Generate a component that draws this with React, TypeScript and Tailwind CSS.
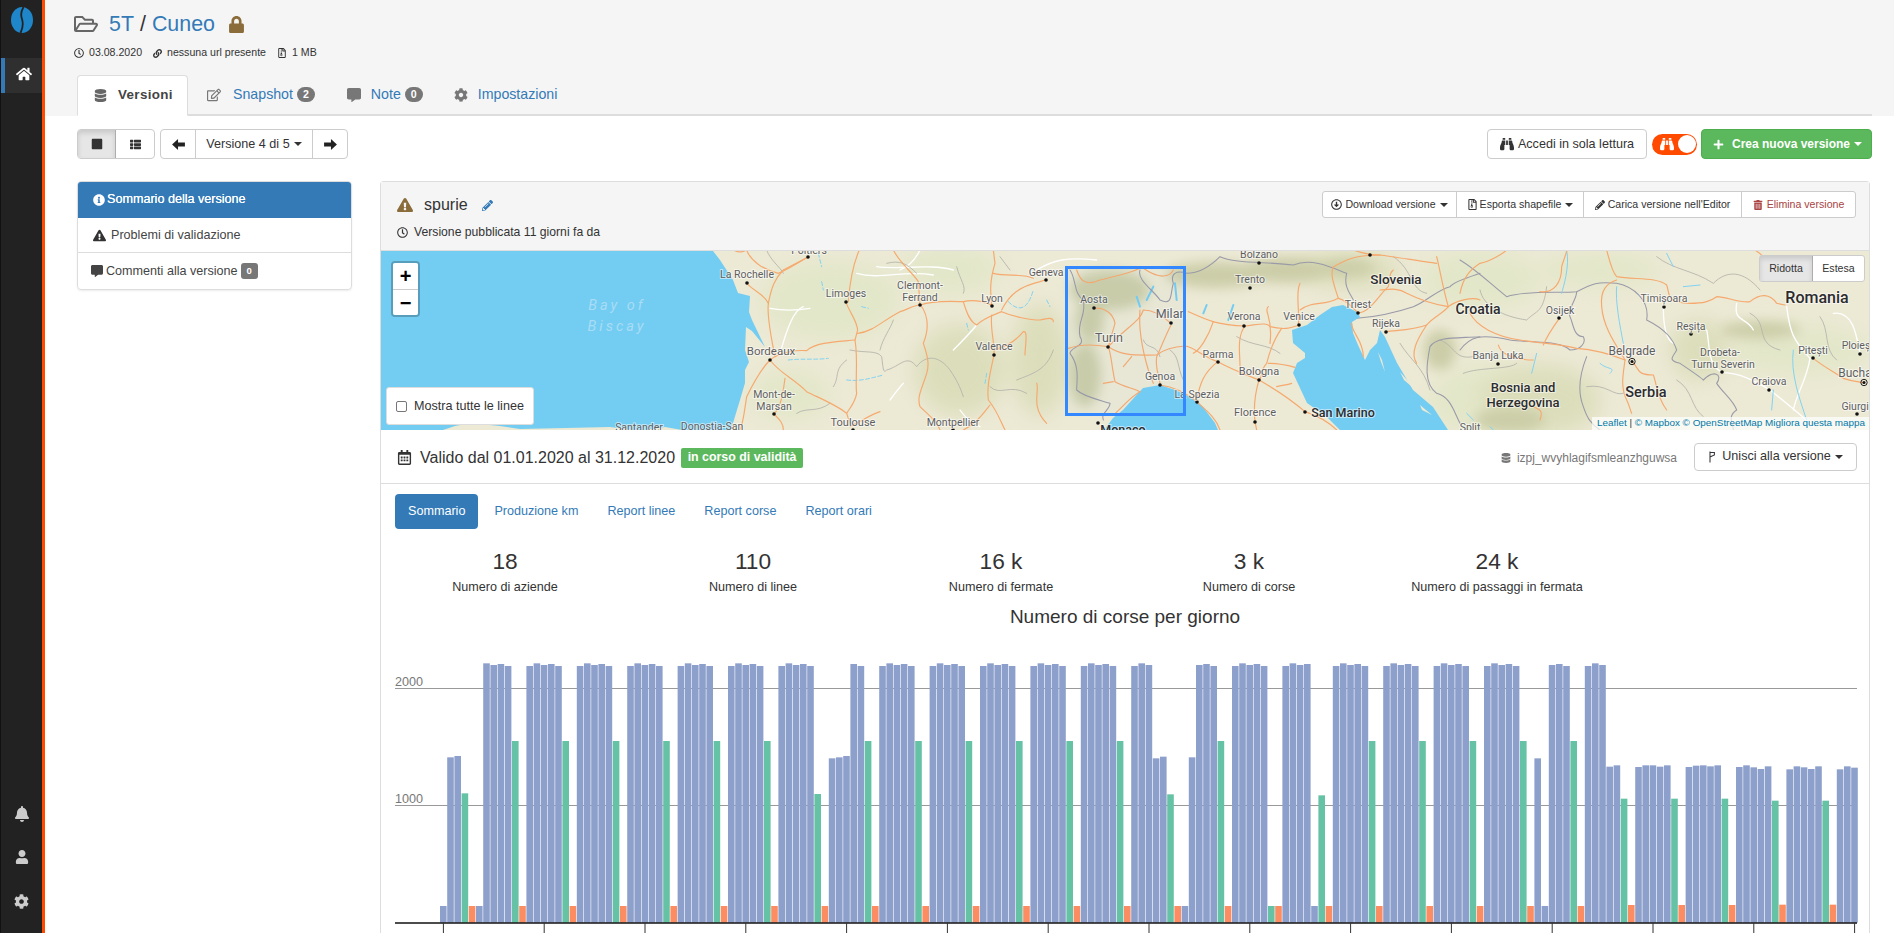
import React from "react";
import {
  FaHome, FaBell, FaUser, FaCog, FaLock, FaRegFolderOpen, FaRegClock, FaLink, FaRegFileArchive,
  FaDatabase, FaRegEdit, FaCommentAlt, FaStop, FaThList, FaBinoculars,
  FaPlus, FaInfoCircle, FaExclamationTriangle, FaPencilAlt, FaRegArrowAltCircleDown, FaTrashAlt, FaRegCalendarAlt,
} from "react-icons/fa";

const Caret = () => (
  <span className="inline-block w-0 h-0 ml-[4px] align-middle border-x-[4px] border-x-transparent border-t-[4px] border-t-current" />
);

const Arrow = ({ flip }: { flip?: boolean }) => (
  <svg viewBox="0 0 14 12" className={flip ? "w-[13px] h-[11px] -scale-x-100" : "w-[13px] h-[11px]"} fill="#222">
    <path d="M14,3.8 H6.5 V0 L0,6 L6.5,12 V8.2 H14 Z" />
  </svg>
);

/* ---------- chart data: y values are measured on the chart's 3x scale, from an 818 baseline ---------- */
const B = "#8da0cb", G = "#66c2a5", O = "#fc8d62";
type Bar = [string, number];
const week: number[] = [48, 40, 45, 42, 48];
function buildBars(): Bar[] {
  const bars: Bar[] = [];
  const blues = (a: number[]) => a.forEach((y) => bars.push([B, y]));
  const tail = (g = 273, o = 768) => { bars.push([G, g]); bars.push([O, o]); };
  blues([768, 322, 318]); tail(430);
  blues([768, 40, 45, 42, 48]); tail();
  for (let i = 0; i < 5; i++) { blues(week); tail(); }
  blues(week); tail(432);
  blues([325, 322, 318, 42, 48]); tail();
  for (let i = 0; i < 5; i++) { blues(week); tail(); }
  blues([48, 40, 45, 325, 320]); tail(433);
  blues([768, 322, 45, 42, 48]); tail();
  blues(week); tail(768);
  blues([48, 40, 45, 42, 768]); tail(436);
  for (let i = 0; i < 4; i++) { blues(week); tail(); }
  blues([325, 768, 45, 42, 48]); tail();
  blues([48, 40, 45, 350, 346]); tail(446, 765);
  blues([351, 346, 346, 350, 346]); tail(446, 765);
  blues([351, 347, 346, 349, 346]); tail(446, 765);
  blues([351, 346, 352, 357, 349]); tail(452, 764);
  blues([358, 349, 352, 357, 349]); tail(452, 764);
  blues([358, 349, 353]);
  return bars;
}
const bars = buildBars();

function Chart() {
  const ticks = Array.from({ length: 15 }, (_, i) => 443.4 + i * 100.8);
  return (
    <svg viewBox="381 640 1488 293" className="block w-[1488px] h-[293px] font-['Liberation_Sans',Arial,sans-serif]">
      <line x1="395" x2="1857" y1="688.5" y2="688.5" stroke="#999" strokeWidth="1" />
      <line x1="395" x2="1857" y1="805.5" y2="805.5" stroke="#999" strokeWidth="1" />
      <text x="395" y="686" fontSize="12.6" fill="#777">2000</text>
      <text x="395" y="803" fontSize="12.6" fill="#777">1000</text>
      {bars.map(([c, y], i) => (
        <rect key={i} x={440 + i * 7.2} y={650 + y / 3} width={6.6} height={(818 - y) / 3} fill={c} />
      ))}
      <line x1="395" x2="1857" y1="923" y2="923" stroke="#111" strokeWidth="1.6" />
      {ticks.map((x) => (
        <line key={x} x1={x} x2={x} y1="923" y2="933" stroke="#333" strokeWidth="1" />
      ))}
    </svg>
  );
}

/* ---------- map ---------- */
type L = [string, number, number, number?, number?];
const labels: L[] = [
  ["Poitiers", 809, 254], ["La Rochelle", 747, 278], ["Limoges", 846, 297], ["Clermont-", 920, 289], ["Ferrand", 920, 301],
  ["Lyon", 992, 302], ["Geneva", 1046, 276], ["Valence", 994, 350], ["Bordeaux", 771, 355, 11.5], ["Mont-de-", 774, 398], ["Marsan", 774, 410],
  ["Toulouse", 853, 426, 11], ["Montpellier", 953, 426, 10.5], ["Santander", 639, 431], ["Donostia-San", 712, 430],
  ["Aosta", 1094, 303], ["Milan", 1171, 318, 12.5], ["Turin", 1109, 342, 12.5], ["Genoa", 1160, 380], ["La Spezia", 1197, 398],
  ["Bolzano", 1259, 258], ["Trento", 1250, 283], ["Verona", 1244, 320], ["Venice", 1299, 320], ["Parma", 1218, 358], ["Bologna", 1259, 375, 11],
  ["Florence", 1255, 416, 11], ["Triest", 1358, 308], ["Rijeka", 1386, 327], ["Split", 1470, 431],
  ["Osijek", 1560, 314], ["Timișoara", 1664, 302], ["Reșița", 1691, 330], ["Banja Luka", 1498, 359], ["Belgrade", 1632, 355, 12],
  ["Drobeta-", 1720, 356], ["Turnu Severin", 1723, 368], ["Pitești", 1813, 354], ["Craiova", 1769, 385], ["Ploieș", 1856, 349], ["Buchar", 1857, 377, 12], ["Giurgiu", 1858, 410],
];
const bold: L[] = [
  ["Monaco", 1123, 434, 12.5], ["San Marino", 1343, 417, 12.5], ["Slovenia", 1396, 284, 13.5], ["Croatia", 1478, 314, 14],
  ["Romania", 1817, 303, 16], ["Bosnia and", 1523, 392, 13], ["Herzegovina", 1523, 407, 13], ["Serbia", 1646, 397, 14.5],
];
const dots: [number, number][] = [
  [808, 257], [747, 283], [846, 302], [920, 305], [992, 306], [1046, 280], [994, 355], [770, 360], [774, 414], [853, 430], [953, 430],
  [1094, 308], [1171, 323], [1108, 347], [1160, 385], [1197, 402], [1098, 423], [1259, 263], [1250, 288], [1244, 326], [1299, 325],
  [1218, 362], [1259, 380], [1255, 422], [1305, 412], [1358, 313], [1386, 332], [1559, 318], [1664, 307], [1691, 334], [1498, 364],
  [1722, 372], [1813, 358], [1860, 354], [1769, 390], [1857, 414], [1370, 255],
];

const roads10 = [
  "M140,0 C150,30 190,60 235,70 C270,55 290,40 323,22", "M323,22 L250,60 C225,85 215,110 205,160 C200,200 215,270 225,320",
  "M140,100 C170,130 190,130 205,160", "M210,330 C240,305 290,300 320,302 C350,275 420,275 465,270",
  "M437,155 C450,190 470,210 473,240 L465,270 C475,330 465,400 470,430 C465,460 445,480 440,490", "M478,0 C460,40 450,90 445,155",
  "M473,250 C520,245 550,210 600,185 C620,180 640,165 660,165", "M580,0 C600,40 640,70 655,95 L660,165",
  "M662,165 C680,190 690,230 670,280 C680,310 690,340 680,370 C665,420 650,440 660,470 C680,490 710,510 720,540",
  "M662,165 C700,150 770,155 790,155 C810,150 840,150 875,165", "M790,155 C800,190 810,215 830,225 C850,205 880,195 905,185 C940,200 990,210 1020,210 C1040,205 1060,200 1060,215",
  "M875,165 C870,120 870,90 885,40 L880,0", "M905,180 C930,130 960,110 1020,95 L1035,90", "M875,195 C870,240 885,280 882,315 C870,370 860,410 865,450 C890,480 900,510 915,540",
  "M880,300 C920,290 950,270 970,245 C985,240 975,290 975,315", "M210,330 C240,370 280,385 320,425 C360,445 410,465 440,490 L450,520",
  "M210,330 C190,350 160,400 140,440 C135,470 130,520 120,540", "M255,385 C250,420 245,470 222,492 C240,510 250,520 250,540",
  "M450,530 C490,510 520,490 540,485", "M790,540 C830,520 850,490 870,465", "M880,70 C920,80 970,70 1000,85", "M1010,400 C1020,420 990,470 1040,520",
  "M100,0 C120,10 130,5 140,0",
];
const roads11 = [
  "M333,220 C300,190 270,180 250,180 C240,215 200,230 145,290", "M385,185 C440,210 470,225 555,228 C590,225 620,215 630,230 C670,240 690,235 718,225",
  "M145,290 C190,320 230,315 290,315 C310,300 340,290 375,288 C400,290 430,320 473,335 C520,360 560,375 597,390 C650,420 700,455 735,485 C780,500 810,520 830,540",
  "M240,180 C235,240 250,310 265,360 L280,400", "M333,225 C315,260 300,300 290,320 C285,350 295,370 300,400",
  "M145,290 C155,320 155,350 165,395 C190,410 220,415 240,425 C210,440 180,480 160,495", "M300,405 C340,410 380,430 410,455 C450,490 470,510 480,540",
  "M410,450 C420,400 430,370 473,335", "M597,390 C585,430 580,470 585,515 L590,540", "M555,228 C530,260 540,310 540,350", "M460,215 C445,260 420,300 400,310",
  "M665,235 C640,270 630,300 620,340 C600,360 610,380 597,390", "M720,100 C705,130 720,180 715,225", "M720,180 C760,150 790,170 835,145 C860,150 880,175 893,188",
  "M835,145 C820,100 810,70 820,50 C860,30 880,15 960,15 C1000,20 1090,35 1130,40", "M960,120 C980,120 1010,110 1040,130 C1080,150 1130,165 1165,170 C1190,150 1240,140 1260,150",
  "M893,188 C930,190 960,130 985,110 C990,90 985,70 1000,60", "M978,245 C1020,240 1060,240 1100,225 C1120,200 1150,190 1165,170", "M875,220 C875,250 910,270 910,320",
  "M1100,225 C1070,270 1050,310 1070,340", "M105,175 C130,170 160,190 165,220 L145,290", "M50,60 C60,90 75,110 120,90 C160,80 210,70 240,55", "M25,295 C70,280 110,285 145,290",
  "M625,170 C610,185 640,200 630,280", "M625,340 C650,340 680,345 705,352", "M650,410 C670,405 680,405 695,400", "M1165,170 C1150,120 1140,60 1130,20", "M340,60 C330,80 300,90 250,55",
  "M190,350 L215,320", "M130,400 L160,395", "M880,0 C920,15 950,15 960,15",
];
const roads12 = [
  "M0,130 C10,80 30,60 60,40 C90,35 130,10 140,0", "M30,190 C50,230 110,260 180,270 C240,280 290,280 350,295 C420,300 470,320 495,330", "M240,125 C280,130 305,100 305,50 C310,30 320,10 320,0",
  "M298,205 C280,230 260,260 250,285", "M495,330 C480,300 430,240 425,170 C420,120 440,100 470,90", "M440,0 C450,40 460,70 470,80 C520,90 590,80 620,105 C630,130 615,160 690,160 C730,160 750,155 770,140 C800,140 840,160 870,155 C900,130 930,130 950,160 L975,165",
  "M495,330 C490,370 480,410 500,450 C510,470 510,480 515,490", "M517,335 C540,360 530,375 580,375 C590,400 590,440 620,480", "M1060,325 C1090,350 1130,370 1150,385 C1180,395 1190,395 1210,398",
  "M115,285 C120,310 160,330 220,330", "M220,470 C240,480 250,480 240,510", "M885,0 C900,10 905,15 910,20",
];
const white = [
  "M240,310 C260,240 280,180 310,170", "M760,300 C790,270 810,250 830,225", "M210,175 C260,185 300,180 330,175", "M780,480 C800,510 820,520 840,530", "M570,450 C600,410 600,410 610,400",
  "M530,50 C600,60 690,40 760,60", "M1010,60 C1060,30 1100,20 1190,30", "M470,70 C540,90 610,60 700,75", "M660,0 C640,40 620,50 600,60",
];
const white12 = [
  "M610,170 C610,230 620,270 640,280", "M740,240 C750,280 740,350 790,368 C840,370 880,390 930,420 C980,460 1030,500 1060,530", "M980,170 C990,250 1000,270 1050,325",
  "M830,160 C820,220 860,200 880,240", "M1050,325 C1040,390 1010,430 1000,480", "M1120,190 C1180,180 1190,260 1200,310",
];
const border11 = [
  "M30,60 C50,90 40,130 70,150 C80,200 50,210 60,260 C80,290 30,290 30,310 C60,350 50,390 50,420 C70,440 120,450 150,460 C150,480 120,490 130,510",
  "M240,60 C230,90 280,120 300,150 C340,170 330,130 340,100 C330,70 350,60 380,70 C420,70 450,50 480,20 C520,40 620,35 700,45 C760,20 830,60 860,70 C850,110 870,130 880,150",
  "M890,205 C950,200 1000,190 1060,170 C1100,155 1130,120 1170,110 C1180,95 1230,80 1260,70", "M1260,260 C1180,265 1130,260 1110,290 C1100,340 1090,400 1130,430 C1170,440 1180,480 1200,520",
];
const border12 = [
  "M0,30 C50,60 90,100 140,140 C200,120 300,130 350,125 C400,100 410,95 470,100 C520,110 570,150 560,210 C620,240 640,270 650,300 C640,320 620,330 660,340 C690,360 720,380 730,390 C760,360 790,370 770,400 C790,430 820,450 830,480 C800,500 820,520 820,540",
  "M0,300 C30,260 60,250 150,270 C220,280 300,270 330,300 C360,300 380,280 370,260 C340,260 340,220 330,200 C320,180 350,150 350,125", "M380,320 C360,370 350,420 370,470 C380,500 390,520 420,540",
];
const light = [
  "M450,300 C500,310 530,300 545,320 C550,360 550,370 560,360 C600,350 620,310 650,350 C680,310 720,320 750,360 C770,390 780,410 790,440", "M400,410 C420,380 400,360 440,330",
  "M540,300 C550,260 570,240 580,210", "M560,40 C600,30 620,40 650,70", "M200,0 C210,30 240,50 250,70", "M770,50 C780,90 800,110 790,130", "M290,490 C320,470 350,490 390,460",
  "M870,410 C900,440 930,400 980,430", "M930,60 L900,20", "M950,390 C1000,370 1040,360 1060,300",
];
const light11 = ["M250,270 C260,300 290,280 300,320", "M330,300 C360,320 350,350 370,390", "M530,260 C580,290 620,280 660,310", "M1000,20 C1060,60 1050,120 1100,130", "M1140,270 C1190,290 1180,330 1240,320", "M1020,280 C1050,330 1090,350 1110,420"];
const light12 = ["M60,120 C70,170 130,200 200,210 C230,180 250,190 260,110", "M10,370 C60,350 150,360 170,340", "M590,20 C640,60 700,60 760,100 C800,60 850,60 900,120", "M650,390 C700,420 690,470 730,500", "M870,190 C930,220 880,280 960,300", "M1080,200 C1110,240 1090,300 1130,330", "M380,410 C440,400 460,440 490,430"];
const rivers = ["M355,10 L365,50", "M365,95 L370,120", "M485,170 L505,175", "M265,330 C310,325 350,330 385,325", "M440,390 C480,395 510,385 550,375", "M925,155 C950,180 980,190 1000,120", "M1040,150 L1050,170", "M800,220 L805,240", "M860,370 L855,400"];
const rivers12 = ["M320,0 C330,50 310,110 305,130", "M470,110 C465,150 480,230 490,280", "M420,340 C440,360 470,350 450,370", "M620,10 L640,50", "M670,110 L720,105", "M230,310 L215,370", "M1000,300 C990,370 1020,450 1040,510", "M940,420 L935,480", "M20,490 L40,510", "M90,530 L100,540"];

function MapArt() {
  return (
    <svg viewBox="381 251 1488 179" preserveAspectRatio="none" className="absolute inset-0 w-full h-full font-[Roboto,sans-serif]">
      <defs>
        <filter id="soft" x="-30%" y="-30%" width="160%" height="160%"><feGaussianBlur stdDeviation="10" /></filter>
        <filter id="softer" x="-30%" y="-30%" width="160%" height="160%"><feGaussianBlur stdDeviation="6" /></filter>
      </defs>
      <rect x="381" y="251" width="1488" height="179" fill="#ece9d5" />
      <g filter="url(#soft)" fill="#e3e7c9">
        <ellipse cx="830" cy="300" rx="70" ry="40" /><ellipse cx="790" cy="395" rx="40" ry="25" /><ellipse cx="950" cy="270" rx="50" ry="25" />
        <ellipse cx="1480" cy="280" rx="60" ry="30" /><ellipse cx="1600" cy="270" rx="60" ry="18" /><ellipse cx="1800" cy="350" rx="70" ry="25" /><ellipse cx="1480" cy="400" rx="50" ry="35" />
      </g>
      <g filter="url(#soft)" fill="#dcdebb">
        <ellipse cx="960" cy="370" rx="45" ry="45" /><ellipse cx="1040" cy="360" rx="28" ry="55" />
        <ellipse cx="1540" cy="400" rx="60" ry="35" /><ellipse cx="1700" cy="350" rx="30" ry="30" /><ellipse cx="1350" cy="270" rx="50" ry="18" />
      </g>
      <g filter="url(#softer)" fill="#cccea8">
        <ellipse cx="1110" cy="290" rx="40" ry="20" /><ellipse cx="1085" cy="375" rx="16" ry="32" /><ellipse cx="1090" cy="320" rx="14" ry="22" />
        <ellipse cx="1215" cy="275" rx="50" ry="13" /><ellipse cx="1285" cy="270" rx="45" ry="13" /><ellipse cx="1345" cy="268" rx="30" ry="9" />
        <ellipse cx="1760" cy="330" rx="40" ry="9" /><ellipse cx="1440" cy="350" rx="16" ry="20" /><ellipse cx="1510" cy="420" rx="35" ry="12" />
      </g>
      <g transform="translate(700,250) scale(.33333)" fill="none" strokeLinecap="round">
        {white.map((d, i) => <path key={i} d={d} stroke="#fff" strokeWidth="4" />)}
        {light.map((d, i) => <path key={i} d={d} stroke="#b4b4ab" strokeWidth="2.6" />)}
        {rivers.map((d, i) => <path key={i} d={d} stroke="#7fd2f2" strokeWidth="3" strokeDasharray="12 7" />)}
      </g>
      <g transform="translate(1060,250) scale(.33333)" fill="none" strokeLinecap="round">
        {light11.map((d, i) => <path key={i} d={d} stroke="#b4b4ab" strokeWidth="2.6" />)}
        <path d="M230,140 L240,170 M260,150 L280,110 M345,100 L350,150 M440,165 L430,190 M520,165 L505,210" stroke="#73cdf2" strokeWidth="6" />
        {border11.map((d, i) => <path key={i} d={d} stroke="#9a9aa8" strokeWidth="3.2" />)}
      </g>
      <g transform="translate(1460,250) scale(.33333)" fill="none" strokeLinecap="round">
        {white12.map((d, i) => <path key={i} d={d} stroke="#fff" strokeWidth="4" />)}
        {light12.map((d, i) => <path key={i} d={d} stroke="#b4b4ab" strokeWidth="2.6" />)}
        {border12.map((d, i) => <path key={i} d={d} stroke="#9a9aa8" strokeWidth="3.2" />)}
        {rivers12.map((d, i) => <path key={i} d={d} stroke="#7fd2f2" strokeWidth="3" />)}
      </g>
      {/* seas */}
      <g fill="#73cdf2">
        <path d="M381,251 L713,251 L720,260 L733,280 L738,293 L750,296 L749,312 L752,320 L765,347 L752,331 L746,327 L745,350 L749,362 L745,370 L745,383 L740,400 L733,423 L730,430 L700,430 L682,430 L665,427 L640,431 L610,427 L520,429 L500,426 L470,423 L455,426 L440,431 L381,430 Z" />
        <path d="M1104,430 L1113,418 L1123,410 L1132,400 L1143,388 L1160,385 L1175,390 L1193,398 L1203,407 L1215,423 L1218,430 Z" />
        <path d="M1292,330 L1293,343 L1305,353 L1305,358 L1297,363 L1293,373 L1307,403 L1327,417 L1340,430 L1448,430 L1433,407 L1413,390 L1397,363 L1385,337 L1380,330 L1377,343 L1370,350 L1365,360 L1358,345 L1353,333 L1352,322 L1360,317 L1357,312 L1343,305 L1332,307 L1320,315 L1307,325 Z" />
      </g>
      <g fill="#ece9d5"><path d="M1378,352 L1382,360 L1385,372 L1381,362 Z M1392,345 L1397,352 L1400,360 L1394,352 Z M1400,372 L1418,392 L1404,380 Z M1420,405 L1432,415 L1422,410 Z" /></g>
      <g transform="translate(700,250) scale(.33333)" fill="none" stroke="#f6a96e" strokeWidth="3.5" strokeLinecap="round">
        {roads10.map((d, i) => <path key={i} d={d} />)}
      </g>
      <g transform="translate(1060,250) scale(.33333)" fill="none" stroke="#f6a96e" strokeWidth="3.5" strokeLinecap="round">
        {roads11.map((d, i) => <path key={i} d={d} />)}
      </g>
      <g transform="translate(1460,250) scale(.33333)" fill="none" stroke="#f6a96e" strokeWidth="3.5" strokeLinecap="round">
        {roads12.map((d, i) => <path key={i} d={d} />)}
      </g>
      {dots.map(([x, y], i) => <circle key={i} cx={x} cy={y} r="1.8" fill="#111" />)}
      <circle cx="1632" cy="361.5" r="3.2" fill="none" stroke="#222" /><circle cx="1632" cy="361.5" r="1.5" fill="#111" />
      <circle cx="1864" cy="382.5" r="3.2" fill="none" stroke="#222" /><circle cx="1864" cy="382.5" r="1.5" fill="#111" />
      <g textAnchor="middle" fill="#5f5f62" stroke="#fff" strokeOpacity=".55" strokeWidth="2" paintOrder="stroke" fontSize="10.5">
        {labels.map(([t, x, y, s]) => <text key={t} x={x} y={y} fontSize={s}>{t}</text>)}
      </g>
      <g textAnchor="middle" fill="#2c2c2e" stroke="#fff" strokeOpacity=".55" strokeWidth="2" paintOrder="stroke" fontWeight="500">
        {bold.map(([t, x, y, s]) => <text key={t} x={x} y={y} fontSize={s}>{t}</text>)}
      </g>
      <g textAnchor="middle" fill="#a9dcf5" fontSize="14.5" fontStyle="italic" letterSpacing="3">
        <text x="617" y="310">Bay of</text><text x="617" y="331">Biscay</text>
      </g>
      <rect x="1066.5" y="267.5" width="118" height="147" fill="#3388ff" fillOpacity=".02" stroke="#3388ff" strokeWidth="3" />
    </svg>
  );
}

function App() {
  return (
    <div className="flex h-[933px] w-[1894px] overflow-hidden bg-white text-[#333] text-[12.6px] font-['Liberation_Sans',Arial,sans-serif]">
      {/* sidebar */}
      <aside className="w-[45px] h-full shrink-0 flex flex-col bg-[#222] border-l border-l-[#111] border-r-[3px] border-r-[#ff4a00]">
        <div className="h-[58px] flex items-start justify-center pt-[7px]">
          <svg viewBox="0 0 22 26" className="w-[22px] h-[26px]">
            <ellipse cx="11" cy="13" rx="11" ry="13" fill="#1f86c9" />
            <path d="M12.5,0 C9.5,5 9.5,8 11,12 C12.5,17 11.5,22 9.5,26" stroke="#222" strokeWidth="1.8" fill="none" />
          </svg>
        </div>
        <div className="h-[35px] flex items-center justify-center bg-[#2f2f2f] border-l-[4px] border-l-[#337ab7] pb-[3px] text-white text-[16px]">
          <FaHome />
        </div>
        <div className="mt-auto flex flex-col items-center text-[#ccc] pb-[24px]">
          <FaBell className="text-[16px] mb-[28px]" />
          <FaUser className="text-[14px] mb-[30px]" />
          <FaCog className="text-[15px]" />
        </div>
      </aside>

      <main className="flex-1 min-w-0 flex flex-col">
        {/* header */}
        <header className="h-[116px] shrink-0 bg-[#f5f5f5] flex flex-col">
          <div className="pl-[29px] pt-[10px] flex items-center h-[38px]">
            <FaRegFolderOpen className="text-[#666] text-[24px] mr-[11px]" />
            <span className="text-[21.4px] text-[#337ab7] leading-[28px]">5T</span>
            <span className="text-[21.4px] leading-[28px] mx-[6px]">/</span>
            <span className="text-[21.4px] text-[#337ab7] leading-[28px]">Cuneo</span>
            <FaLock className="text-[#8a6d3b] text-[17px] ml-[13px]" />
          </div>
          <div className="pl-[29px] mt-[8px] flex items-center h-[14px] text-[10.6px]">
            <FaRegClock className="text-[10px] mr-[5px]" />
            <span className="mr-[11px]">03.08.2020</span>
            <FaLink className="text-[9px] mr-[5px]" />
            <span className="mr-[11px]">nessuna url presente</span>
            <FaRegFileArchive className="text-[10px] mr-[5px]" />
            <span>1 MB</span>
          </div>
          <div className="mt-auto ml-[32px] mr-[22px] h-[41px] flex items-end border-b-2 border-b-[#ddd]">
            <div className="h-[41px] -mb-[2px] w-[111px] pl-[16px] flex items-center bg-white border border-[#ddd] border-b-white rounded-t-[4px] font-bold text-[#444] text-[13.4px] tracking-[.35px] mr-[2px]">
              <FaDatabase className="text-[13px] text-[#666] mr-[11px]" />Versioni
            </div>
            <div className="h-[39px] flex items-center pl-[17px] pr-[15px] text-[14.2px] text-[#337ab7]">
              <FaRegEdit className="text-[14px] text-[#777] mr-[12px]" />Snapshot
              <span className="ml-[4px] px-[6px] h-[15px] leading-[15px] rounded-[10px] bg-[#777] text-white text-[10.6px] font-bold">2</span>
            </div>
            <div className="h-[39px] flex items-center pl-[17px] pr-[14px] text-[14.2px] text-[#337ab7]">
              <FaCommentAlt className="text-[14px] text-[#777] mr-[10px]" />Note
              <span className="ml-[4px] px-[6px] h-[15px] leading-[15px] rounded-[10px] bg-[#777] text-white text-[10.6px] font-bold">0</span>
            </div>
            <div className="h-[39px] flex items-center pl-[17px] pr-[13px] text-[14.2px] text-[#337ab7]">
              <FaCog className="text-[14px] text-[#777] mr-[10px]" />Impostazioni
            </div>
          </div>
        </header>

        {/* toolbar */}
        <div className="mt-[13px] ml-[32px] mr-[22px] h-[30px] shrink-0 flex items-center">
          <div className="flex h-[30px] border border-[#ccc] rounded-[4px] mr-[5px]">
            <div className="w-[38px] flex items-center justify-center bg-[#e6e6e6] shadow-[inset_0_3px_5px_rgba(0,0,0,0.125)] border-r border-r-[#adadad] rounded-l-[3px] text-[#333] text-[12px]"><FaStop /></div>
            <div className="w-[38px] flex items-center justify-center text-[#333] text-[11px]"><FaThList /></div>
          </div>
          <div className="flex h-[30px] border border-[#ccc] rounded-[4px]">
            <div className="w-[35px] flex items-center justify-center border-r border-r-[#ccc]"><Arrow /></div>
            <div className="w-[117px] flex items-center justify-center border-r border-r-[#ccc]">Versione 4 di 5<Caret /></div>
            <div className="w-[34px] flex items-center justify-center"><Arrow flip /></div>
          </div>
          <div className="ml-auto h-[30px] w-[160px] flex items-center justify-center border border-[#ccc] rounded-[4px] mr-[5px]">
            <FaBinoculars className="text-[14px] mr-[4px]" />Accedi in sola lettura
          </div>
          <div className="w-[45px] h-[21px] rounded-full bg-[#ff4a00] flex items-center justify-between pl-[8px] pr-[1px] mr-[4px]">
            <FaBinoculars className="text-white text-[14px]" />
            <span className="w-[18px] h-[18px] rounded-full bg-white" />
          </div>
          <div className="h-[30px] w-[171px] pl-[2px] flex items-center justify-center bg-[#5cb85c] border border-[#4cae4c] rounded-[4px] text-white font-bold text-[12px]">
            <FaPlus className="text-[11px] mr-[8px]" />Crea nuova versione<Caret />
          </div>
        </div>

        {/* body */}
        <div className="mt-[22px] ml-[32px] flex items-start">
          {/* left list */}
          <div className="w-[275px] shrink-0 mr-[28px] border border-[#ddd] rounded-[4px] shadow-[0_1px_2px_rgba(0,0,0,0.075)] overflow-hidden">
            <div className="h-[36px] flex items-center pl-[15px] pb-[1px] bg-[#337ab7] text-white font-medium [text-shadow:0_0_0.4px_#fff]">
              <FaInfoCircle className="text-[12px] mr-[2px]" />Sommario della versione
            </div>
            <div className="h-[35px] flex items-center pl-[15px] border-b border-b-[#ddd] text-[#444]">
              <FaExclamationTriangle className="text-[13px] text-[#333] mr-[5px]" />Problemi di validazione
            </div>
            <div className="h-[36px] flex items-center pl-[13px] text-[#444]">
              <FaCommentAlt className="text-[12px] text-[#444] mr-[3px]" />Commenti alla versione
              <span className="ml-[3px] w-[17px] h-[16px] flex items-center justify-center rounded-[3px] bg-[#777] text-white text-[9.5px] font-bold">0</span>
            </div>
          </div>

          {/* card */}
          <div className="w-[1490px] h-[800px] shrink-0 border-x border-t border-[#ddd] rounded-t-[4px]">
            <div className="h-[69px] flex justify-between bg-[#f5f5f5] border-b border-b-[#ddd] pl-[16px] pr-[13px] pt-[9px]">
              <div>
                <div className="flex items-center h-[28px]">
                  <FaExclamationTriangle className="text-[16px] text-[#8a6d3b] mr-[11px]" />
                  <span className="text-[16px]">spurie</span>
                  <FaPencilAlt className="text-[11px] text-[#337ab7] ml-[14px]" />
                </div>
                <div className="flex items-center h-[14px] mt-[6px] text-[12.2px]">
                  <FaRegClock className="text-[11px] mr-[6px]" />Versione pubblicata 11 giorni fa da
                </div>
              </div>
              <div className="flex h-[27px] bg-white border border-[#ccc] rounded-[3px] text-[10.6px]">
                <div className="w-[134px] flex items-center justify-center border-r border-r-[#ccc]"><FaRegArrowAltCircleDown className="text-[11px] mr-[3px]" />Download versione<Caret /></div>
                <div className="w-[127px] flex items-center justify-center border-r border-r-[#ccc]"><FaRegFileArchive className="text-[11px] mr-[2px]" />Esporta shapefile<Caret /></div>
                <div className="w-[158px] flex items-center justify-center border-r border-r-[#ccc]"><FaPencilAlt className="text-[10px] mr-[3px]" />Carica versione nell'Editor</div>
                <div className="w-[113px] flex items-center justify-center text-[#a94442]"><FaTrashAlt className="text-[10px] mr-[4px]" />Elimina versione</div>
              </div>
            </div>

            {/* map */}
            <div className="relative h-[179px] overflow-hidden">
              <MapArt />
              <div className="absolute left-[10px] top-[10px] w-[29px] h-[56px] rounded-[4px] border-2 border-[#0000003a] bg-clip-padding flex flex-col text-black">
                <span className="h-[27px] flex items-center justify-center bg-white rounded-t-[2px] border-b border-b-[#ccc] text-[20px] font-bold leading-none">+</span>
                <span className="h-[25px] flex items-center justify-center bg-white rounded-b-[2px] text-[20px] font-bold leading-none">−</span>
              </div>
              <div className="absolute left-[5px] bottom-[5px] w-[148px] h-[38px] flex items-center bg-white border border-[#ddd] rounded-[3px] pl-[9px]">
                <span className="w-[11px] h-[11px] mr-[7px] border border-[#767676] rounded-[2px] bg-white" />
                Mostra tutte le linee
              </div>
              <div className="absolute right-[4px] top-[4px] flex h-[27px] bg-white border border-[#ccc] rounded-[3px] text-[10.6px]">
                <span className="w-[53px] flex items-center justify-center bg-[#e6e6e6] border-r border-r-[#adadad] shadow-[inset_0_3px_5px_rgba(0,0,0,0.125)]">Ridotta</span>
                <span className="w-[51px] flex items-center justify-center">Estesa</span>
              </div>
              <div className="absolute right-0 bottom-0 h-[13px] w-[277px] flex items-center pl-[5px] bg-[#ffffffb3] text-[9.9px] text-[#333] whitespace-nowrap">
                <span className="text-[#0078a8]">Leaflet</span>&nbsp;|&nbsp;<span className="text-[#0078a8]">© Mapbox © OpenStreetMap Migliora questa mappa</span>
              </div>
            </div>

            {/* validity row */}
            <div className="h-[54px] flex items-center border-b border-b-[#ddd] pl-[16px] pr-[12px] pt-[2px]">
              <FaRegCalendarAlt className="text-[15px] text-[#333] mr-[8px]" />
              <span className="text-[16px]">Valido dal 01.01.2020 al 31.12.2020</span>
              <span className="ml-[6px] h-[20px] w-[122px] flex items-center justify-center bg-[#5cb85c] rounded-[2px] text-white font-bold text-[12.4px]">in corso di validità</span>
              <FaDatabase className="ml-auto text-[10px] text-[#777] mr-[6px]" />
              <span className="text-[12px] text-[#777] mr-[17px]">izpj_wvyhlagifsmleanzhguwsa</span>
              <div className="w-[163px] h-[28px] -mt-[2px] flex items-center justify-center border border-[#ccc] rounded-[4px]">
                <svg viewBox="0 0 10 14" className="w-[8px] h-[12px] mr-[6px]" fill="none" stroke="#333" strokeWidth="1.3">
                  <path d="M2.5,0 V14 M2.5,1.5 H8 L8,4.5 L2.5,7" />
                </svg>
                Unisci alla versione<Caret />
              </div>
            </div>

            {/* pills */}
            <div className="mt-[10px] ml-[14px] h-[35px] flex items-center gap-[3px]">
              <span className="h-[35px] px-[13px] flex items-center bg-[#337ab7] rounded-[4px] text-white">Sommario</span>
              <span className="h-[35px] px-[13px] flex items-center text-[#337ab7]">Produzione km</span>
              <span className="h-[35px] px-[13px] flex items-center text-[#337ab7]">Report linee</span>
              <span className="h-[35px] px-[13px] flex items-center text-[#337ab7]">Report corse</span>
              <span className="h-[35px] px-[13px] flex items-center text-[#337ab7]">Report orari</span>
            </div>

            {/* stats */}
            <div className="mt-[18px] grid grid-cols-6 text-center">
              {[["18", "Numero di aziende"], ["110", "Numero di linee"], ["16 k", "Numero di fermate"], ["3 k", "Numero di corse"], ["24 k", "Numero di passaggi in fermata"]].map(([n, l]) => (
                <div key={l}>
                  <div className="text-[22.7px] leading-[28px] text-[#333]">{n}</div>
                  <div className="leading-[16px] mt-[4px]">{l}</div>
                </div>
              ))}
            </div>
            <div className="mt-[9px] text-center text-[19px] leading-[26px] h-[36px]">Numero di corse per giorno</div>
            <Chart />
          </div>
        </div>
      </main>
    </div>
  );
}

export default App;
